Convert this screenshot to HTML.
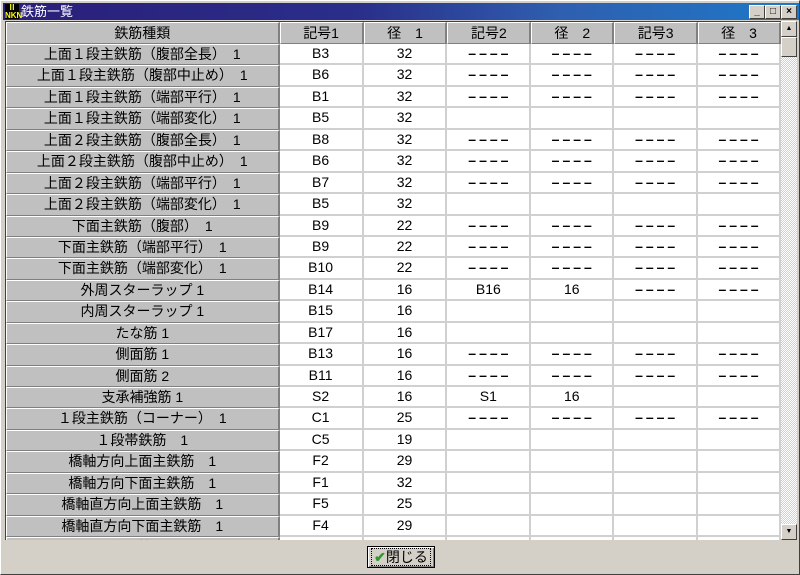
<!DOCTYPE html>
<html><head><meta charset="utf-8"><style>
*{margin:0;padding:0;box-sizing:border-box}
body{width:800px;height:575px;background:#d4d0c8;position:relative;overflow:hidden;font-family:"Liberation Sans","Noto Sans CJK JP",sans-serif;font-size:13px;color:#000}
.win{position:absolute;left:0;top:0;width:800px;height:575px;border:1px solid #fff;border-right-color:#404040;border-bottom-color:#404040;background:#d4d0c8}
.title{position:absolute;left:2px;top:2px;width:796px;height:17px;background:linear-gradient(90deg,#2a1e7a 0%,#2a2f8a 45%,#2f5fb0 70%,#1e78c8 100%);color:#fff;font-size:13px;line-height:17px;padding-left:18px}
.ico{position:absolute;left:2px;top:1px;width:14px;height:15px;background:#000;color:#ff0;font-size:8px;line-height:8px;font-weight:bold;text-align:center}
.tb{position:absolute;top:2px;width:16px;height:14px;background:#d4d0c8;border:1px solid #fff;border-right-color:#404040;border-bottom-color:#404040;color:#000;font-size:10px;line-height:12px;text-align:center;font-weight:bold}
.grid{position:absolute;left:4px;top:20px;width:776px;height:519px;background:#fff;overflow:hidden;border-left:1px solid #404040;border-top:1px solid #404040}
.row{display:flex;height:21.45px}
.row div{border-right:2px solid #d0d0d0;border-bottom:2px solid #d0d0d0;text-align:center;line-height:19px;white-space:nowrap;overflow:hidden;font-size:14px}
.hdr div,.row div.l{background:#c0c0c0;border:1px solid #fff;border-right:1px solid #808080;border-bottom:1px solid #808080;border-right-width:2px;font-size:14px}
.hdr{height:22px}
.hdr div{line-height:20px}
.d{font-weight:bold;letter-spacing:3px;text-indent:3px}
.c0{width:274px}.c1{width:84px}.c2{width:84px}.c3{width:84px}.c4{width:83px}.c5{width:84px}.c6{width:83px}
.sb{position:absolute;left:780px;top:20px;width:16px;height:519px;background:#e8e6e0 repeating-conic-gradient(#d4d0c8 0 25%,#fff 0 50%) 0 0/2px 2px}
.sbb{position:absolute;left:0;width:16px;height:16px;background:#d4d0c8;border:1px solid #fff;border-right-color:#404040;border-bottom-color:#404040;font-size:7px;line-height:14px;text-align:center}
.btn{position:absolute;left:366px;top:545px;width:68px;height:22px;border:1px solid #000;background:#d4d0c8;box-shadow:inset 1px 1px #fff,inset -1px -1px #808080;font-size:14px;line-height:20px;text-align:center}
.btn span{border:1px dotted #000;padding:0 2px}
</style></head><body>
<div class="win">
<div class="title"><div class="ico">Ⅱ<br>NKN</div>鉄筋一覧
<div class="tb" style="left:746px">_</div><div class="tb" style="left:762px">□</div><div class="tb" style="left:778px">×</div></div>
<div class="grid">
<div class="row hdr"><div class="c0">鉄筋種類</div><div class="c1">記号1</div><div class="c2">径　1</div><div class="c3">記号2</div><div class="c4">径　2</div><div class="c5">記号3</div><div class="c6">径　3</div></div>
<div class="row"><div class="c0 l">上面１段主鉄筋（腹部全長）　1</div><div class="c1">B3</div><div class="c2">32</div><div class="c3 d">––––</div><div class="c4 d">––––</div><div class="c5 d">––––</div><div class="c6 d">––––</div></div>
<div class="row"><div class="c0 l">上面１段主鉄筋（腹部中止め）　1</div><div class="c1">B6</div><div class="c2">32</div><div class="c3 d">––––</div><div class="c4 d">––––</div><div class="c5 d">––––</div><div class="c6 d">––––</div></div>
<div class="row"><div class="c0 l">上面１段主鉄筋（端部平行）　1</div><div class="c1">B1</div><div class="c2">32</div><div class="c3 d">––––</div><div class="c4 d">––––</div><div class="c5 d">––––</div><div class="c6 d">––––</div></div>
<div class="row"><div class="c0 l">上面１段主鉄筋（端部変化）　1</div><div class="c1">B5</div><div class="c2">32</div><div class="c3"></div><div class="c4"></div><div class="c5"></div><div class="c6"></div></div>
<div class="row"><div class="c0 l">上面２段主鉄筋（腹部全長）　1</div><div class="c1">B8</div><div class="c2">32</div><div class="c3 d">––––</div><div class="c4 d">––––</div><div class="c5 d">––––</div><div class="c6 d">––––</div></div>
<div class="row"><div class="c0 l">上面２段主鉄筋（腹部中止め）　1</div><div class="c1">B6</div><div class="c2">32</div><div class="c3 d">––––</div><div class="c4 d">––––</div><div class="c5 d">––––</div><div class="c6 d">––––</div></div>
<div class="row"><div class="c0 l">上面２段主鉄筋（端部平行）　1</div><div class="c1">B7</div><div class="c2">32</div><div class="c3 d">––––</div><div class="c4 d">––––</div><div class="c5 d">––––</div><div class="c6 d">––––</div></div>
<div class="row"><div class="c0 l">上面２段主鉄筋（端部変化）　1</div><div class="c1">B5</div><div class="c2">32</div><div class="c3"></div><div class="c4"></div><div class="c5"></div><div class="c6"></div></div>
<div class="row"><div class="c0 l">下面主鉄筋（腹部）　1</div><div class="c1">B9</div><div class="c2">22</div><div class="c3 d">––––</div><div class="c4 d">––––</div><div class="c5 d">––––</div><div class="c6 d">––––</div></div>
<div class="row"><div class="c0 l">下面主鉄筋（端部平行）　1</div><div class="c1">B9</div><div class="c2">22</div><div class="c3 d">––––</div><div class="c4 d">––––</div><div class="c5 d">––––</div><div class="c6 d">––––</div></div>
<div class="row"><div class="c0 l">下面主鉄筋（端部変化）　1</div><div class="c1">B10</div><div class="c2">22</div><div class="c3 d">––––</div><div class="c4 d">––––</div><div class="c5 d">––––</div><div class="c6 d">––––</div></div>
<div class="row"><div class="c0 l">外周スターラップ 1</div><div class="c1">B14</div><div class="c2">16</div><div class="c3">B16</div><div class="c4">16</div><div class="c5 d">––––</div><div class="c6 d">––––</div></div>
<div class="row"><div class="c0 l">内周スターラップ 1</div><div class="c1">B15</div><div class="c2">16</div><div class="c3"></div><div class="c4"></div><div class="c5"></div><div class="c6"></div></div>
<div class="row"><div class="c0 l">たな筋 1</div><div class="c1">B17</div><div class="c2">16</div><div class="c3"></div><div class="c4"></div><div class="c5"></div><div class="c6"></div></div>
<div class="row"><div class="c0 l">側面筋 1</div><div class="c1">B13</div><div class="c2">16</div><div class="c3 d">––––</div><div class="c4 d">––––</div><div class="c5 d">––––</div><div class="c6 d">––––</div></div>
<div class="row"><div class="c0 l">側面筋 2</div><div class="c1">B11</div><div class="c2">16</div><div class="c3 d">––––</div><div class="c4 d">––––</div><div class="c5 d">––––</div><div class="c6 d">––––</div></div>
<div class="row"><div class="c0 l">支承補強筋 1</div><div class="c1">S2</div><div class="c2">16</div><div class="c3">S1</div><div class="c4">16</div><div class="c5"></div><div class="c6"></div></div>
<div class="row"><div class="c0 l">１段主鉄筋（コーナー）　1</div><div class="c1">C1</div><div class="c2">25</div><div class="c3 d">––––</div><div class="c4 d">––––</div><div class="c5 d">––––</div><div class="c6 d">––––</div></div>
<div class="row"><div class="c0 l">１段帯鉄筋　1</div><div class="c1">C5</div><div class="c2">19</div><div class="c3"></div><div class="c4"></div><div class="c5"></div><div class="c6"></div></div>
<div class="row"><div class="c0 l">橋軸方向上面主鉄筋　1</div><div class="c1">F2</div><div class="c2">29</div><div class="c3"></div><div class="c4"></div><div class="c5"></div><div class="c6"></div></div>
<div class="row"><div class="c0 l">橋軸方向下面主鉄筋　1</div><div class="c1">F1</div><div class="c2">32</div><div class="c3"></div><div class="c4"></div><div class="c5"></div><div class="c6"></div></div>
<div class="row"><div class="c0 l">橋軸直方向上面主鉄筋　1</div><div class="c1">F5</div><div class="c2">25</div><div class="c3"></div><div class="c4"></div><div class="c5"></div><div class="c6"></div></div>
<div class="row"><div class="c0 l">橋軸直方向下面主鉄筋　1</div><div class="c1">F4</div><div class="c2">29</div><div class="c3"></div><div class="c4"></div><div class="c5"></div><div class="c6"></div></div>
<div class="row"><div class="c0 l">側面筋　1</div><div class="c1"></div><div class="c2"></div><div class="c3"></div><div class="c4"></div><div class="c5"></div><div class="c6"></div></div>
</div>
<div class="sb"><div class="sbb" style="top:0">▲</div><div class="sbb" style="top:16px;height:20px"></div><div class="sbb" style="top:503px">▼</div></div>
<div class="btn"><span><b style="color:#2a9a2a">✔</b>閉じる</span></div>
</div>
</body></html>
